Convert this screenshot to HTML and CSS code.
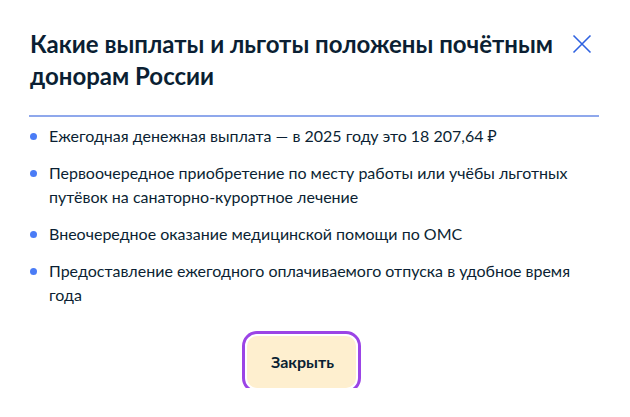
FILE: index.html
```html
<!DOCTYPE html>
<html lang="ru">
<head>
<meta charset="utf-8">
<link rel="stylesheet" href="styles.css">
</head>
<body>
<div class="modal">
  <div class="head">
    <h1 class="title">Какие выплаты и льготы положены почётным донорам России</h1>
    <button class="close" aria-label="Закрыть">
      <svg width="20" height="20" viewBox="0 0 20 20"><path d="M1.5 1.5 L18.5 18.5 M18.5 1.5 L1.5 18.5" stroke="#2f62e0" stroke-width="1.6" fill="none"/></svg>
    </button>
  </div>
  <div class="divider"></div>
  <ul class="list">
    <li>Ежегодная денежная выплата — в 2025 году это 18 207,64 ₽</li>
    <li>Первоочередное приобретение по месту работы или учёбы льготных путёвок на санаторно-курортное лечение</li>
    <li>Внеочередное оказание медицинской помощи по ОМС</li>
    <li>Предоставление ежегодного оплачиваемого отпуска в удобное время года</li>
  </ul>
  <div class="footer">
    <button class="btn">Закрыть</button>
  </div>
</div>
</body>
</html>
```
FILE: styles.css
```css
html, body {
  margin: 0;
  padding: 0;
  background: #fff;
}
body {
  font-family: Lato, "Noto Sans", sans-serif;
  color: #0b1f33;
}
.modal {
  padding: 28px 31px 0 29px;
}
.head {
  display: flex;
  align-items: flex-start;
  justify-content: space-between;
}
.title {
  margin: 0 0 0 1px;
  font-size: 24px;
  line-height: 32px;
  font-weight: 700;
  width: 530px;
}
.close {
  margin: 6px 7px 0 0;
  padding: 0;
  border: 0;
  background: none;
  width: 20px;
  height: 20px;
  display: flex;
}
.divider {
  height: 2px;
  background: #8fa8ec;
  margin-top: 23px;
}
.list {
  list-style: none;
  margin: 7px 0 0;
  padding: 0;
  display: flex;
  flex-direction: column;
  gap: 13px;
}
.list li {
  position: relative;
  padding-left: 20px;
  font-size: 16px;
  line-height: 24px;
  width: 530px;
}
.list li::before {
  content: "";
  position: absolute;
  left: 1px;
  top: 9px;
  width: 7px;
  height: 7px;
  border-radius: 50%;
  background: #4a7cf6;
}
.footer {
  display: flex;
  padding: 29px 0 0 218px;
}
.btn {
  font-family: Lato, "Noto Sans", sans-serif;
  font-size: 16px;
  line-height: 24px;
  font-weight: 700;
  color: #0b1f33;
  background: #feefcf;
  border: 0;
  border-radius: 10px;
  padding: 14px 24px;
  width: 109px;
  outline: 3px solid #9b44e6;
  outline-offset: 2px;
}
```
